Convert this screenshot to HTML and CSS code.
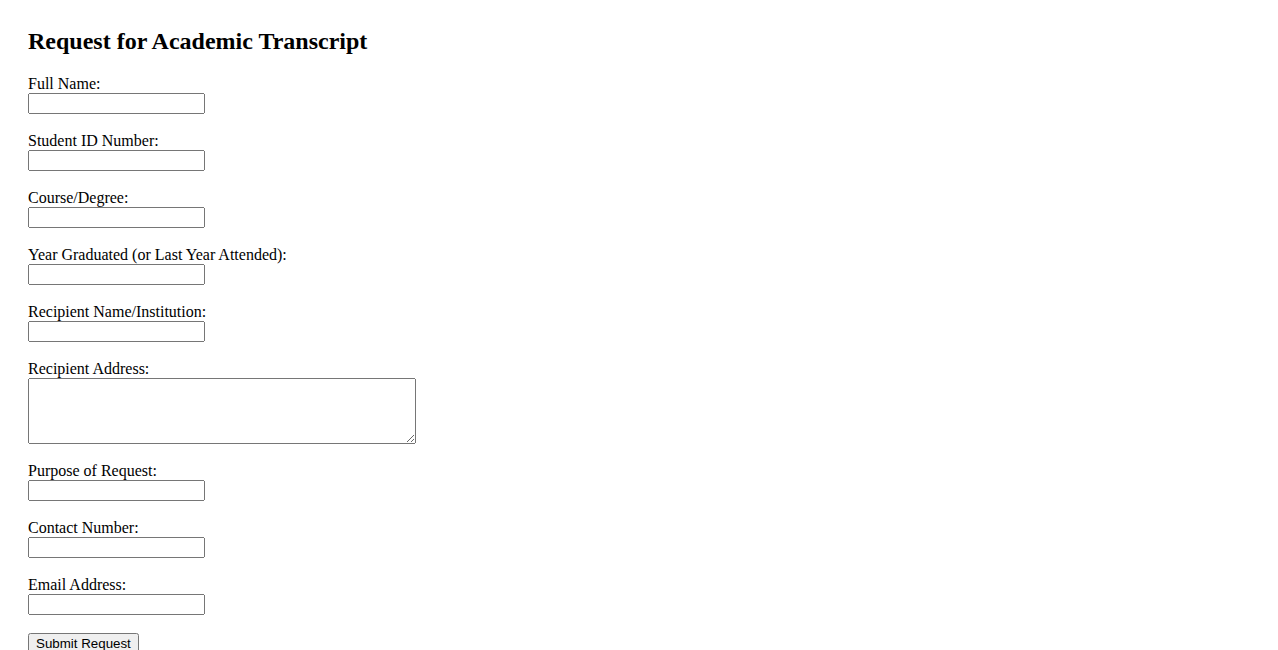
FILE: index.html
```html
<!DOCTYPE html>
<html lang="en">
<head>
  <meta charset="UTF-8">
  <title>Request for Academic Transcript</title>
  <link rel="stylesheet" href="styles.css">
</head>
<body>
  <div class="page">
    <h2>Request for Academic Transcript</h2>

    <form class="request-form">
      <div class="field">
        <label for="fullName">Full Name:</label>
        <input type="text" id="fullName">
      </div>

      <div class="field">
        <label for="studentId">Student ID Number:</label>
        <input type="text" id="studentId">
      </div>

      <div class="field">
        <label for="course">Course/Degree:</label>
        <input type="text" id="course">
      </div>

      <div class="field">
        <label for="yearGraduated">Year Graduated (or Last Year Attended):</label>
        <input type="text" id="yearGraduated">
      </div>

      <div class="field">
        <label for="recipientName">Recipient Name/Institution:</label>
        <input type="text" id="recipientName">
      </div>

      <div class="field">
        <label for="recipientAddress">Recipient Address:</label>
        <textarea id="recipientAddress" class="address"></textarea>
      </div>

      <div class="field">
        <label for="purpose">Purpose of Request:</label>
        <input type="text" id="purpose">
      </div>

      <div class="field">
        <label for="contact">Contact Number:</label>
        <input type="text" id="contact">
      </div>

      <div class="field">
        <label for="email">Email Address:</label>
        <input type="email" id="email">
      </div>

      <button type="submit">Submit Request</button>
    </form>
  </div>
</body>
</html>
```

FILE: styles.css
```css
body {
  margin: 8px;
  font-family: "Liberation Serif", "Times New Roman", serif;
  font-size: 16px;
  color: #000;
  background: #fff;
}
.page {
  padding: 20px;
}
h2 {
  font-size: 24px;
  font-weight: bold;
  margin: 0 0 19.92px;
}
.field {
  display: flex;
  flex-direction: column;
  align-items: flex-start;
  margin-bottom: 18px;
}
.field label {
  height: 18px;
  line-height: 18px;
}
input, textarea, button {
  font-family: "Liberation Sans", Arial, sans-serif;
  font-size: 13.333px;
}
input {
  box-sizing: border-box;
  width: 177px;
  height: 21px;
}
.address {
  box-sizing: border-box;
  width: 388px;
  height: 66px;
  font-family: "Liberation Mono", "Courier New", monospace;
}
```
